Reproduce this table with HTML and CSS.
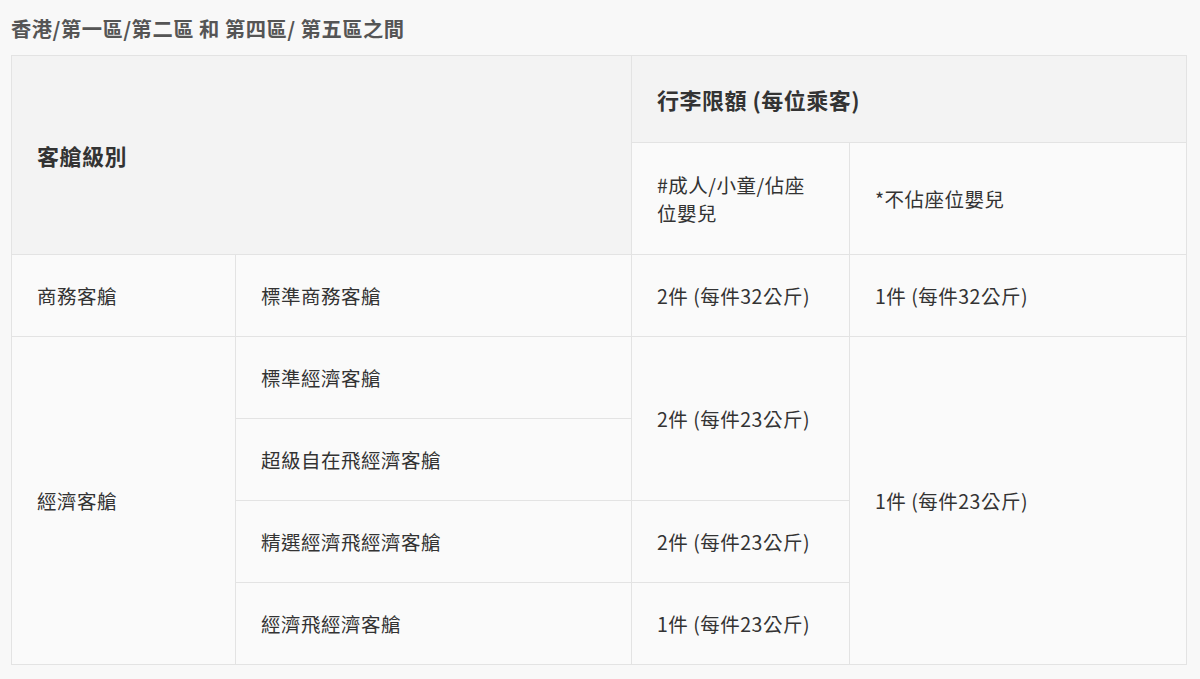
FILE: index.html
```html
<!DOCTYPE html>
<html lang="zh-Hant">
<head>
<meta charset="utf-8">
<link rel="stylesheet" href="styles.css">
</head>
<body>
<div class="page">
  <h2 class="title">香港/第一區/第二區 和 第四區/ 第五區之間</h2>
  <table class="baggage">
    <colgroup>
      <col class="c1"><col class="c2"><col class="c3"><col class="c4">
    </colgroup>
    <thead>
      <tr class="h1">
        <th colspan="2" rowspan="2" class="cabin-head">客艙級別</th>
        <th colspan="2" class="allow-head">行李限額 (每位乘客)</th>
      </tr>
      <tr class="h2">
        <td class="sub">#成人/小童/佔座位嬰兒</td>
        <td class="sub">*不佔座位嬰兒</td>
      </tr>
    </thead>
    <tbody>
      <tr>
        <td>商務客艙</td>
        <td>標準商務客艙</td>
        <td>2件 (每件32公斤)</td>
        <td>1件 (每件32公斤)</td>
      </tr>
      <tr>
        <td rowspan="4">經濟客艙</td>
        <td>標準經濟客艙</td>
        <td rowspan="2">2件 (每件23公斤)</td>
        <td rowspan="4">1件 (每件23公斤)</td>
      </tr>
      <tr>
        <td>超級自在飛經濟客艙</td>
      </tr>
      <tr>
        <td>精選經濟飛經濟客艙</td>
        <td>2件 (每件23公斤)</td>
      </tr>
      <tr>
        <td>經濟飛經濟客艙</td>
        <td>1件 (每件23公斤)</td>
      </tr>
    </tbody>
  </table>
</div>
</body>
</html>
```

FILE: styles.css
```css
html, body {
  margin: 0;
  padding: 0;
  background: #f8f8f8;
}
body {
  font-family: "Noto Sans CJK TC", "Noto Sans", sans-serif;
  color: #333;
}
.page {
  padding: 13px 14px 0 11px;
}
.title {
  margin: 0 0 12px 0;
  font-size: 20.3px;
  line-height: 30px;
  font-weight: 700;
  letter-spacing: 0.5px;
  color: #555;
}
.baggage {
  border-collapse: collapse;
  width: 1175px;
  table-layout: fixed;
  background: #fafafa;
}
.c1 { width: 224px; }
.c2 { width: 396px; }
.c3 { width: 218px; }
.c4 { width: 337px; }
.baggage th,
.baggage td {
  border: 1.5px solid #e3e3e3;
  padding: 0 26px 0 25px;
  text-align: left;
  vertical-align: middle;
  font-size: 19.5px;
  line-height: 28px;
  font-weight: 400;
  letter-spacing: 0.5px;
}
.baggage th {
  font-weight: 700;
  font-size: 22px;
  line-height: 30px;
  background: #f3f3f3;
}
.baggage .sub {
  background: #fafafa;
}
.h1 { height: 87px; }
.h2 { height: 112px; }
.baggage tbody tr { height: 82px; }
```
